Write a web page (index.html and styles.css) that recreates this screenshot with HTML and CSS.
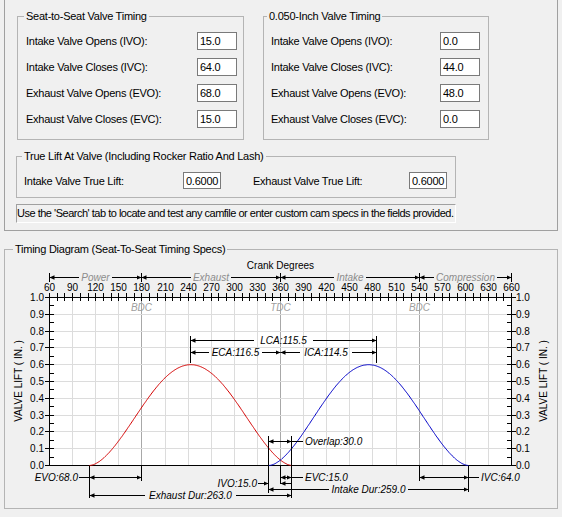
FILE: index.html
```html
<!DOCTYPE html>
<html lang="en">
<head>
    <meta charset="UTF-8">
    <title>Cam Timing</title>
    <link rel="stylesheet" href="styles.css">
</head>
<body>

<!-- Cam specs page -->
<div class="cam-specs">
    <div class="timing-groups">
        <fieldset class="group seat">
            <legend>Seat-to-Seat Valve Timing</legend>
            <div class="row"><label>Intake Valve Opens (IVO):</label><input type="text" value="15.0"></div>
            <div class="row"><label>Intake Valve Closes (IVC):</label><input type="text" value="64.0"></div>
            <div class="row"><label>Exhaust Valve Opens (EVO):</label><input type="text" value="68.0"></div>
            <div class="row"><label>Exhaust Valve Closes (EVC):</label><input type="text" value="15.0"></div>
        </fieldset>
        <fieldset class="group inch">
            <legend>0.050-Inch Valve Timing</legend>
            <div class="row"><label>Intake Valve Opens (IVO):</label><input type="text" value="0.0"></div>
            <div class="row"><label>Intake Valve Closes (IVC):</label><input type="text" value="44.0"></div>
            <div class="row"><label>Exhaust Valve Opens (EVO):</label><input type="text" value="48.0"></div>
            <div class="row"><label>Exhaust Valve Closes (EVC):</label><input type="text" value="0.0"></div>
        </fieldset>
    </div>

    <fieldset class="group true-lift">
        <legend>True Lift At Valve (Including Rocker Ratio And Lash)</legend>
        <div class="lift-row">
            <div class="lift-item"><label>Intake Valve True Lift:</label><input type="text" value="0.6000"></div>
            <div class="lift-item wide"><label>Exhaust Valve True Lift:</label><input type="text" value="0.6000"></div>
        </div>
    </fieldset>

    <div class="info">Use the 'Search' tab to locate and test any camfile or enter custom cam specs in the fields provided.</div>
</div>

<!-- Timing diagram -->
<fieldset class="diagram">
    <legend>Timing Diagram (Seat-To-Seat Timing Specs)</legend>
    <svg id="chart" class="chart" width="552" height="252" viewBox="5 256 552 252">
        <defs>
            <marker id="arrow" viewBox="0 0 5 5" refX="5" refY="2.5" markerWidth="5" markerHeight="5" markerUnits="userSpaceOnUse" orient="auto-start-reverse">
                <path d="M0,0.3 L5,2.5 L0,4.7 z"/>
            </marker>
        </defs>

        <text class="axis-title" x="280.5" y="268.5">Crank Degrees</text>

        <!-- strokes -->
        <g class="dims">
            <line x1="79" y1="277.5" x2="49.5" y2="277.5" marker-end="url(#arrow)"/>
            <line x1="112" y1="277.5" x2="141.5" y2="277.5" marker-end="url(#arrow)"/>
            <line x1="191" y1="277.5" x2="141.5" y2="277.5" marker-end="url(#arrow)"/>
            <line x1="231" y1="277.5" x2="280.5" y2="277.5" marker-end="url(#arrow)"/>
            <line x1="334" y1="277.5" x2="280.5" y2="277.5" marker-end="url(#arrow)"/>
            <line x1="366" y1="277.5" x2="419.5" y2="277.5" marker-end="url(#arrow)"/>
            <line x1="434" y1="277.5" x2="419.5" y2="277.5" marker-end="url(#arrow)"/>
            <line x1="497" y1="277.5" x2="511.5" y2="277.5" marker-end="url(#arrow)"/>
            <path d="M49.5,273V282 M141.5,273V282 M280.5,273V282 M419.5,273V282 M511.5,273V282"/>
        </g>
        <text class="phase" x="95.5" y="281">Power</text>
        <text class="phase" x="211" y="281">Exhaust</text>
        <text class="phase" x="350" y="281">Intake</text>
        <text class="phase" x="465.5" y="281">Compression</text>

        <rect class="plot" x="49.5" y="297.5" width="462" height="168"/>
        <g id="grid" class="grid"></g>

        <text class="mark" x="141.5" y="311">BDC</text>
        <text class="mark" x="280.5" y="311">TDC</text>
        <text class="mark" x="419.5" y="311">BDC</text>

        <g id="axes" class="dims"></g>
        <g id="curves"></g>

        <!-- centerlines -->
        <g class="dims">
            <path d="M190.5,336V363 M376.5,336V363"/>
            <line x1="254" y1="340.5" x2="190.5" y2="340.5" marker-end="url(#arrow)"/>
            <line x1="313" y1="340.5" x2="376.5" y2="340.5" marker-end="url(#arrow)"/>
            <line x1="209" y1="352.5" x2="190.5" y2="352.5" marker-end="url(#arrow)"/>
            <line x1="262" y1="352.5" x2="280.5" y2="352.5" marker-end="url(#arrow)"/>
            <line x1="300" y1="352.5" x2="280.5" y2="352.5" marker-end="url(#arrow)"/>
            <line x1="352" y1="352.5" x2="376.5" y2="352.5" marker-end="url(#arrow)"/>
        </g>
        <text class="note mid" x="283.5" y="344">LCA:115.5</text>
        <text class="note mid" x="235.5" y="356">ECA:116.5</text>
        <text class="note mid" x="326" y="356">ICA:114.5</text>

        <!-- overlap and events -->
        <g class="dims">
            <path d="M268.5,436V493 M291.5,436V498 M89.5,466V498 M141.5,466V481 M280.5,466V484 M419.5,466V481 M468.5,466V492"/>
            <line x1="268.5" y1="441.5" x2="291.5" y2="441.5" marker-start="url(#arrow)" marker-end="url(#arrow)"/>
            <line x1="291.5" y1="441.5" x2="303" y2="441.5"/>

            <line x1="79" y1="477.5" x2="89.5" y2="477.5"/>
            <line x1="89.5" y1="477.5" x2="141.5" y2="477.5" marker-start="url(#arrow)" marker-end="url(#arrow)"/>
            <line x1="280.5" y1="477.5" x2="291.5" y2="477.5" marker-start="url(#arrow)" marker-end="url(#arrow)"/>
            <line x1="291.5" y1="477.5" x2="303" y2="477.5"/>
            <line x1="419.5" y1="477.5" x2="468.5" y2="477.5" marker-start="url(#arrow)" marker-end="url(#arrow)"/>
            <line x1="468.5" y1="477.5" x2="479" y2="477.5"/>

            <line x1="258" y1="483.5" x2="268.5" y2="483.5" marker-end="url(#arrow)"/>
            <line x1="291.5" y1="483.5" x2="280.5" y2="483.5" marker-end="url(#arrow)"/>

            <line x1="329" y1="489.5" x2="268.5" y2="489.5" marker-end="url(#arrow)"/>
            <line x1="408" y1="489.5" x2="468.5" y2="489.5" marker-end="url(#arrow)"/>

            <line x1="145" y1="495.5" x2="89.5" y2="495.5" marker-end="url(#arrow)"/>
            <line x1="236" y1="495.5" x2="291.5" y2="495.5" marker-end="url(#arrow)"/>
        </g>
        <text class="note" x="305" y="445">Overlap:30.0</text>
        <text class="note end" x="78" y="481">EVO:68.0</text>
        <text class="note" x="305" y="481">EVC:15.0</text>
        <text class="note" x="481" y="481">IVC:64.0</text>
        <text class="note end" x="257" y="487">IVO:15.0</text>
        <text class="note mid" x="368.5" y="493">Intake Dur:259.0</text>
        <text class="note mid" x="190.5" y="499">Exhaust Dur:263.0</text>

        <text class="lift-title" transform="translate(18.5 381) rotate(-90)">VALVE LIFT ( IN. )</text>
        <text class="lift-title" transform="translate(543.5 381) rotate(-90)">VALVE LIFT ( IN. )</text>
    </svg>
</fieldset>

<script src="script.js"></script>
</body>
</html>
```

FILE: styles.css
```css
body {
    margin: 0;
    width: 562px;
    height: 517px;
    overflow: hidden;
    background-color: #f0f0f0;
    font-family: "Liberation Sans", Arial, sans-serif;
    font-size: 11px;
    letter-spacing: -0.25px;
    color: #000;
}

.cam-specs {
    margin-left: 4px;
    width: 554px;
    height: 231px;
    box-sizing: border-box;
    border: 1px solid #a0a0a0;
    border-top: none;
    padding: 10px 0 0 12px;
}

.timing-groups {
    display: flex;
    gap: 19px;
}

.group {
    margin: 0;
    box-sizing: border-box;
    border: 1px solid #b4b4b4;
    padding: 9px 6px 11px 8px;
    min-width: 0;
}

.group legend,
.diagram legend {
    padding: 0 2px;
    margin-left: -2px;
    line-height: 13px;
}

.seat {
    width: 227px;
}

.inch {
    width: 226px;
    padding-left: 7px;
    padding-right: 8px;
}

.inch legend {
    margin-left: -4px;
}

.row {
    display: flex;
    justify-content: space-between;
    align-items: center;
    height: 18px;
}

.row + .row {
    margin-top: 8px;
}

input {
    box-sizing: border-box;
    width: 40px;
    height: 18px;
    margin: 0;
    padding: 0 0 0 2px;
    border: 1px solid #7a7a7a;
    background-color: #fff;
    font-family: inherit;
    font-size: 11px;
    letter-spacing: -0.25px;
    color: #000;
}

.true-lift {
    width: 440px;
    margin-top: 10px;
    margin-left: -1px;
    padding: 9px 8px 8px 7px;
}

.lift-row {
    display: flex;
    gap: 32px;
}

.lift-item {
    display: flex;
    justify-content: space-between;
    align-items: center;
    width: 197px;
    height: 17px;
}

.lift-item.wide {
    width: 194px;
}

.lift-item input {
    width: 38px;
    height: 17px;
}

.info {
    width: 440px;
    height: 19px;
    margin-top: 6px;
    margin-left: -1px;
    box-sizing: border-box;
    border: 1px solid #fff;
    border-top-color: #a0a0a0;
    border-left-color: #a0a0a0;
    line-height: 17px;
    letter-spacing: -0.49px;
    white-space: nowrap;
}

.diagram {
    width: 554px;
    box-sizing: border-box;
    margin: 12px 0 0 4px;
    padding: 0;
    border: 1px solid #b4b4b4;
}

.diagram legend {
    margin-left: 8px;
}

.chart {
    display: block;
    font-family: "Liberation Sans", Arial, sans-serif;
    font-size: 10px;
    letter-spacing: 0;
}

.dims line,
.dims path {
    stroke: #000;
    stroke-width: 1;
    fill: none;
}

.plot {
    fill: #fff;
}

.grid line {
    stroke: #dcdcdc;
    shape-rendering: crispEdges;
}

.grid line.center {
    stroke: #a8a8a8;
}

.axis-title,
.mid {
    text-anchor: middle;
}

.end {
    text-anchor: end;
}

.note {
    font-style: italic;
}

.phase {
    fill: #8c8c8c;
    font-style: italic;
    text-anchor: middle;
}

.mark {
    fill: #a0a0a0;
    font-style: italic;
    text-anchor: middle;
}

.lift-title {
    text-anchor: middle;
    dominant-baseline: central;
}

.curve {
    fill: none;
    stroke-width: 1;
}

.curve.exhaust {
    stroke: #d40000;
}

.curve.intake {
    stroke: #0000c8;
}
```

FILE: script.js
```js
var NS = 'http://www.w3.org/2000/svg';

function degX(deg) {
    return 49.5 + (deg - 60) * 0.77;
}

function liftY(lift) {
    return 465.5 - lift * 168;
}

// snap to pixel centres so thin lines stay sharp
function px(v) {
    return Math.floor(v) + 0.5;
}

function add(parent, tag, attrs, text) {
    var node = document.createElementNS(NS, tag);
    for (var k in attrs) {
        node.setAttribute(k, attrs[k]);
    }
    if (text) node.textContent = text;
    parent.appendChild(node);
    return node;
}

var grid = document.getElementById('grid');
var axes = document.getElementById('axes');
var curves = document.getElementById('curves');
var chart = document.getElementById('chart');

for (var d = 90; d < 660; d += 30) {
    var gx = px(degX(d));
    add(grid, 'line', {
        x1: gx, y1: 297.5, x2: gx, y2: 465.5,
        'class': (d % 180 === 0) ? 'center' : ''
    });
}
for (var i = 1; i < 10; i++) {
    var gy = px(liftY(i / 10));
    add(grid, 'line', { x1: 49.5, y1: gy, x2: 511.5, y2: gy });
}

// axis frame and ticks
var frame = 'M49.5,297.5H511.5 M49.5,465.5H511.5 M49.5,297.5V465.5 M511.5,297.5V465.5';
for (var t = 60; t <= 660; t += 10) {
    var tx = px(degX(t));
    frame += ' M' + tx + ',293V301';
}
for (var j = 0; j <= 20; j++) {
    var ty = px(liftY(j * 0.05));
    if (j % 2 === 0) {
        frame += ' M45,' + ty + 'H54 M507,' + ty + 'H516';
    } else {
        frame += ' M49.5,' + ty + 'H54 M507,' + ty + 'H511.5';
    }
}
add(axes, 'path', { d: frame });

for (var n = 60; n <= 660; n += 30) {
    add(chart, 'text', { x: px(degX(n)), y: 291, 'class': 'mid' }, String(n));
}
for (var m = 0; m <= 10; m++) {
    var ly = px(liftY(m / 10)) + 3.5;
    var label = (m / 10).toFixed(1);
    add(chart, 'text', { x: 44, y: ly, 'class': 'end' }, label);
    add(chart, 'text', { x: 516, y: ly }, label);
}

// valve lift curves
function liftAt(deg, open, close) {
    var half = (close - open) / 2;
    var s = 1 - Math.abs(deg - (open + half)) / half;
    if (s <= 0) return 0;
    return 0.6 * Math.pow((1 - Math.cos(Math.PI * s)) / 2, 0.85);
}

function drawCurve(open, close, cls) {
    var pts = [];
    for (var deg = open; deg <= close; deg += 1) {
        pts.push(degX(deg).toFixed(1) + ',' + liftY(liftAt(deg, open, close)).toFixed(1));
    }
    add(curves, 'polyline', { points: pts.join(' '), 'class': 'curve ' + cls });
}

drawCurve(112, 375, 'exhaust');
drawCurve(345, 604, 'intake');
```
